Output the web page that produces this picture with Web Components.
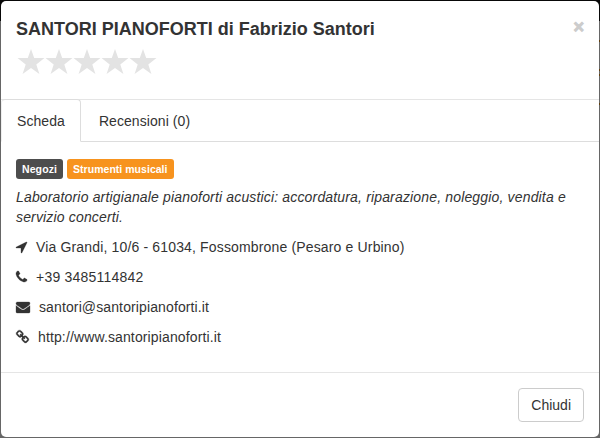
<!DOCTYPE html>
<html lang="it">
<head>
<meta charset="utf-8">
<title>Santori Pianoforti</title>
<style>
  html, body { height: 100%; }
  /* dimmed page behind the dialog: navbar, then content with a few orange marks */
  body {
    margin: 0;
    overflow: hidden;
    box-sizing: border-box;
    padding: 1px;
    background:
      linear-gradient(#63400f, #63400f) 100% 40px / 1px 2px no-repeat,
      linear-gradient(#63400f, #63400f) 100% 69px / 1px 2px no-repeat,
      linear-gradient(#63400f, #63400f) 100% 74px / 1px 2px no-repeat,
      linear-gradient(#63400f, #63400f) 100% 103px / 1px 2px no-repeat,
      linear-gradient(#080808 21px, #666 21px);
    font: 14px/20px "Liberation Sans", Arial, sans-serif;
    color: #333;
  }
</style>
</head>
<body>
<modal-dialog>
  <span slot="title">SANTORI PIANOFORTI di Fabrizio Santori</span>
  <star-rating slot="rating" max="5"></star-rating>
  <tab-bar slot="tabs">
    <tab-item active>Scheda</tab-item>
    <tab-item>Recensioni (0)</tab-item>
  </tab-bar>
  <shop-card>
    <tag-label slot="tags">Negozi</tag-label>
    <tag-label slot="tags" color="#f7931e">Strumenti musicali</tag-label>
    <span slot="description">Laboratorio artigianale pianoforti acustici: accordatura, riparazione, noleggio, vendita e servizio concerti.</span>
    <contact-row icon="location">Via Grandi, 10/6 - 61034, Fossombrone (Pesaro e Urbino)</contact-row>
    <contact-row icon="phone">+39 3485114842</contact-row>
    <contact-row icon="envelope">santori@santoripianoforti.it</contact-row>
    <contact-row icon="link">http://www.santoripianoforti.it</contact-row>
  </shop-card>
  <plain-button slot="footer">Chiudi</plain-button>
</modal-dialog>

<script>
class BaseElement extends HTMLElement {
  constructor() {
    super();
    this.attachShadow({ mode: 'open' });
  }

  connectedCallback() {
    this.shadowRoot.innerHTML = this.template();
  }
}

// Dialog frame: header, tabs, body, footer
class ModalDialog extends BaseElement {
  template() {
    return `
      <style>
        :host {
          display: flex;
          flex-direction: column;
          height: 100%;
          box-sizing: border-box;
          background: #fff;
          border-radius: 5px;
          overflow: hidden;
        }
        header {
          display: flex;
          justify-content: space-between;
          align-items: flex-start;
          box-sizing: border-box;
          height: 99px;
          padding: 15px;
          border-bottom: 1px solid #e5e5e5;
        }
        h4 { margin: 0; font-size: 18px; line-height: 26px; font-weight: bold; }
        .close {
          padding: 1px 0 0;
          border: 0;
          background: none;
          font: bold 18px/21px "Liberation Sans", Arial, sans-serif;
          color: #ccc;
          -webkit-text-stroke: 1px #ccc;
        }
        main { flex: 1; }
        footer {
          display: flex;
          justify-content: flex-end;
          padding: 15px;
          border-top: 1px solid #e5e5e5;
        }
      </style>
      <header>
        <div>
          <h4><slot name="title"></slot></h4>
          <slot name="rating"></slot>
        </div>
        <button class="close" type="button" aria-label="Chiudi">×</button>
      </header>
      <slot name="tabs"></slot>
      <main><slot></slot></main>
      <footer><slot name="footer"></slot></footer>
    `;
  }
}

class StarRating extends BaseElement {
  template() {
    const star = `
      <svg width="28" height="26" viewBox="0 0 28 26" aria-hidden="true">
        <path d="M14 0l3.2 9.1h10.3l-8.2 6.4 3.1 9.4-8.4-5.8-8.4 5.8 3.1-9.4-8.2-6.4h10.3z"/>
      </svg>`;
    return `
      <style>
        :host { display: flex; margin: 7px 0 0 1px; }
        svg { display: block; fill: #e3e3e3; }
      </style>
      ${star.repeat(Number(this.getAttribute('max')) || 5)}
    `;
  }
}

class TabBar extends BaseElement {
  template() {
    return `
      <style>
        :host {
          display: flex;
          gap: 2px;
          height: 41px;
          border-bottom: 1px solid #ddd;
        }
      </style>
      <slot></slot>
    `;
  }
}

class TabItem extends BaseElement {
  template() {
    return `
      <style>
        :host {
          display: block;
          box-sizing: border-box;
          height: 42px;
          padding: 10px 15px;
          border: 1px solid transparent;
          border-radius: 4px 4px 0 0;
          letter-spacing: 0.07px;
        }
        :host([active]) {
          margin-top: -1px;
          height: 43px;
          padding-top: 11px;
          background: #fff;
          border-color: #ddd #ddd #fff;
        }
        :host([active]:first-child) { border-left-color: #eee; }
      </style>
      <slot></slot>
    `;
  }
}

class ShopCard extends BaseElement {
  template() {
    return `
      <style>
        :host { display: block; padding: 17px 15px 0; }
        .tags { display: flex; gap: 4px; margin-bottom: 8px; }
        p { margin: 0 0 10px; font-style: italic; letter-spacing: 0.16px; }
        .contacts { display: flex; flex-direction: column; gap: 10px; }
      </style>
      <div class="tags"><slot name="tags"></slot></div>
      <p><slot name="description"></slot></p>
      <div class="contacts"><slot></slot></div>
    `;
  }
}

class TagLabel extends BaseElement {
  template() {
    return `
      <style>
        :host {
          display: block;
          padding: 0 6px;
          border-radius: 3px;
          background: ${this.getAttribute('color') || '#4d4d4d'};
          color: #fff;
          font-size: 10.5px;
          font-weight: bold;
          line-height: 20px;
          letter-spacing: 0.03px;
        }
        :host(:first-child) { letter-spacing: 0.1px; }
      </style>
      <slot></slot>
    `;
  }
}

// Glyphs are drawn on a 1792 grid, 14px per em; x is the left bearing,
// spacing is the tracking of the text beside the glyph
const ICONS = {
  location: { x: 192, w: 1408, spacing: 0.155, d: 'M1593 349l-640 1280q-17 35-57 35-5 0-15-2-22-5-35.5-22.5t-13.5-39.5v-576h-576q-22 0-39.5-13.5t-22.5-35.5 4-42 29-30l1280-640q13-7 29-7 27 0 45 19 15 14 18.5 34.5t-6.5 39.5z' },
  phone: { x: 192, w: 1408, spacing: 0.22, d: 'M1600 1240q0 27-10 70.5t-21 68.5q-21 50-122 106-94 51-186 51-27 0-53-3.5t-57.5-12.5-47-14.5-55.5-20.5-49-18q-98-35-175-83-127-79-264-216t-216-264q-48-77-83-175-3-9-18-49t-20.5-55.5-14.5-47-12.5-57.5-3.5-53q0-92 51-186 56-101 106-122 25-11 68.5-21t70.5-10q14 0 21 3 18 6 53 76 11 19 30 54t35 63.5 31 53.5q3 4 17.5 25t21.5 35.5 7 28.5q0 20-28.5 50t-62 55-62 53-28.5 46q0 9 5 22.5t8.5 20.5 14 24 11.5 19q76 137 174 235t235 174q2 1 19 11.5t24 14 20.5 8.5 22.5 5q18 0 46-28.5t53-62 55-62 50-28.5q14 0 28.5 7t35.5 21.5 25 17.5q25 15 53.5 31t63.5 35 54 30q70 35 76 53 3 7 3 21z' },
  envelope: { x: 0, w: 1792, spacing: 0.12, d: 'M1792 710v794q0 66-47 113t-113 47h-1472q-66 0-113-47t-47-113v-794q44 49 101 87 362 246 497 345 57 42 92.5 65.5t94.5 48 110 24.5h2q51 0 110-24.5t94.5-48 92.5-65.5q170-123 498-345 57-39 100-87zm0-294q0 79-49 151t-122 123q-376 261-468 325-10 7-42.5 31t-54 38.5-52 32.5-57.5 27-50 9h-2q-23 0-50-9t-57.5-27-52-32.5-54-38.5-42.5-31q-91-64-262-182.5t-205-142.5q-62-42-117-115.5t-55-136.5q0-78 41.5-130t118.5-52h1472q65 0 112.5 47t47.5 113z' },
  link: { x: 64, w: 1664, spacing: 0.13, d: 'M1520 1216q0-40-28-68l-208-208q-28-28-68-28-42 0-72 32 3 3 19 18.5t21.5 21.5 15 19 13 25.5 3.5 27.5q0 40-28 68t-68 28q-15 0-27.5-3.5t-25.5-13-19-15-21.5-21.5-18.5-19q-33 31-33 73 0 40 28 68l206 207q27 27 68 27 40 0 68-26l147-146q28-28 28-67zm-703-705q0-40-28-68l-206-207q-28-28-68-28-39 0-68 27l-147 146q-28 28-28 67 0 40 28 68l208 208q27 27 68 27 42 0 72-31-3-3-19-18.5t-21.5-21.5-15-19-13-25.5-3.5-27.5q0-40 28-68t68-28q15 0 27.5 3.5t25.5 13 19 15 21.5 21.5 18.5 19q33-31 33-73zm895 705q0 120-85 203l-147 146q-83 83-203 83-121 0-204-85l-206-207q-83-83-83-203 0-123 88-209l-88-88q-86 88-208 88-120 0-204-84l-208-208q-84-84-84-204t85-203l147-146q83-83 203-83 121 0 204 85l206 207q83 83 83 203 0 123-88 209l88 88q86-88 208-88 120 0 204 84l208 208q84 84 84 204z' }
};

class ContactRow extends BaseElement {
  template() {
    const icon = ICONS[this.getAttribute('icon')];
    return `
      <style>
        :host { display: flex; align-items: center; gap: 9px; height: 20px; }
        svg { fill: currentColor; stroke: currentColor; stroke-width: 40px; overflow: visible; }
        span { letter-spacing: ${icon.spacing}px; }
      </style>
      <svg width="${icon.w / 128}" height="14" viewBox="${icon.x} 0 ${icon.w} 1792" aria-hidden="true"><path d="${icon.d}"/></svg>
      <span><slot></slot></span>
    `;
  }
}

class PlainButton extends BaseElement {
  template() {
    return `
      <style>
        button {
          display: block;
          padding: 6px 12px;
          border: 1px solid #ccc;
          border-radius: 4px;
          background: #fff;
          color: #333;
          font: inherit;
        }
      </style>
      <button type="button"><slot></slot></button>
    `;
  }
}

customElements.define('modal-dialog', ModalDialog);
customElements.define('star-rating', StarRating);
customElements.define('tab-bar', TabBar);
customElements.define('tab-item', TabItem);
customElements.define('shop-card', ShopCard);
customElements.define('tag-label', TagLabel);
customElements.define('contact-row', ContactRow);
customElements.define('plain-button', PlainButton);
</script>
</body>
</html>
